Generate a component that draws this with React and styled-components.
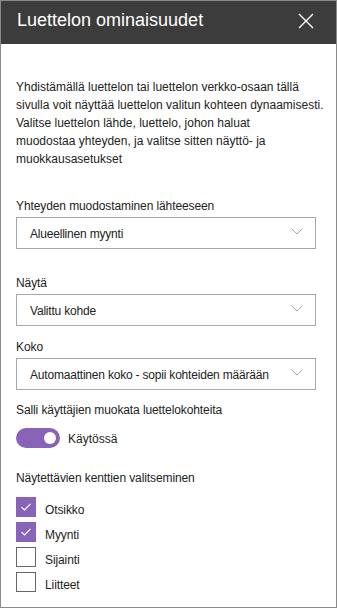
import React, { useState } from 'react';
import styled, { createGlobalStyle } from 'styled-components';

const GlobalStyle = createGlobalStyle`
  html, body {
    margin: 0;
    padding: 0;
    background: #ffffff;
  }
  body {
    font-family: "Liberation Sans", Arial, sans-serif;
    color: #333333;
  }
  * {
    box-sizing: border-box;
  }
`;

const description = [
  'Yhdistämällä luettelon tai luettelon verkko-osaan tällä',
  'sivulla voit näyttää luettelon valitun kohteen dynaamisesti.',
  'Valitse luettelon lähde, luettelo, johon haluat',
  'muodostaa yhteyden, ja valitse sitten näyttö- ja',
  'muokkausasetukset',
];

const Panel = () => {
  const [enabled, setEnabled] = useState(true);
  const [fields, setFields] = useState([
    { name: 'Otsikko', checked: true },
    { name: 'Myynti', checked: true },
    { name: 'Sijainti', checked: false },
    { name: 'Liitteet', checked: false },
  ]);

  const toggleField = (idx) => {
    setFields(fields.map((f, i) => (i === idx ? { ...f, checked: !f.checked } : f)));
  };

  return (
    <Frame>
      <Header>
        <Title>Luettelon ominaisuudet</Title>
        <CloseButton aria-label="Sulje">
          <svg width="16" height="16" viewBox="0 0 16 16">
            <path d="M1 1 L15 15 M15 1 L1 15" stroke="#ffffff" strokeWidth="1.4" fill="none" />
          </svg>
        </CloseButton>
      </Header>

      <Body>
        <Description>
          {description.map((line) => (
            <span key={line}>{line}</span>
          ))}
        </Description>

        <Label top={29}>Yhteyden muodostaminen lähteeseen</Label>
        <Dropdown>
          <span>Alueellinen myynti</span>
          <Chevron />
        </Dropdown>

        <Label top={25}>Näytä</Label>
        <Dropdown>
          <span>Valittu kohde</span>
          <Chevron />
        </Dropdown>

        <Label top={12}>Koko</Label>
        <Dropdown>
          <span>Automaattinen koko - sopii kohteiden määrään</span>
          <Chevron />
        </Dropdown>

        <Label top={11}>Salli käyttäjien muokata luettelokohteita</Label>
        <ToggleRow onClick={() => setEnabled(!enabled)}>
          <Toggle on={enabled}>
            <Knob on={enabled} />
          </Toggle>
          <ToggleText>{enabled ? 'Käytössä' : 'Ei käytössä'}</ToggleText>
        </ToggleRow>

        <Label top={21}>Näytettävien kenttien valitseminen</Label>
        <CheckList>
          {fields.map((f, i) => (
            <CheckRow key={f.name} onClick={() => toggleField(i)}>
              <Box checked={f.checked}>
                {f.checked && (
                  <svg width="12" height="10" viewBox="0 0 12 10">
                    <path d="M1.5 5.2 L4.5 8 L10.5 1.8" stroke="#ffffff" strokeWidth="1.1" fill="none" />
                  </svg>
                )}
              </Box>
              <CheckText>{f.name}</CheckText>
            </CheckRow>
          ))}
        </CheckList>
      </Body>
    </Frame>
  );
};

const Chevron = () => (
  <ChevronIcon width="12" height="7" viewBox="0 0 12 7">
    <path d="M0.5 0.6 L6 6 L11.5 0.6" stroke="#a6a6a6" strokeWidth="1" fill="none" />
  </ChevronIcon>
);

const Frame = styled.div`
  width: 337px;
  height: 608px;
  border: 1px solid #8a8a8a;
  display: flex;
  flex-direction: column;
  overflow: hidden;
`;

const Header = styled.div`
  height: 43px;
  background: #3c3c3c;
  display: flex;
  align-items: center;
  justify-content: space-between;
  padding: 0 22px 4px 16px;
`;

const Title = styled.h1`
  margin: 0;
  font-size: 18px;
  font-weight: 400;
  color: #ffffff;
  letter-spacing: 0;
`;

const CloseButton = styled.button`
  background: none;
  border: none;
  padding: 0;
  width: 16px;
  height: 16px;
  display: flex;
  cursor: pointer;
`;

const Body = styled.div`
  padding: 34px 20px 0 15px;
  display: flex;
  flex-direction: column;
`;

const Description = styled.p`
  margin: 0;
  font-size: 12px;
  line-height: 18px;
  color: #222222;
  letter-spacing: 0;

  span {
    display: block;
    white-space: nowrap;
  }
`;

const Label = styled.div`
  margin-top: ${(p) => p.top}px;
  font-size: 12px;
  line-height: 18px;
  color: #222222;
  letter-spacing: -0.1px;
`;

const Dropdown = styled.div`
  margin-top: 2px;
  height: 32px;
  width: 300px;
  border: 1px solid #a6a6a6;
  display: flex;
  align-items: center;
  justify-content: space-between;
  padding: 2px 12px 0 13px;
  font-size: 12px;
  color: #222222;
  letter-spacing: -0.2px;
  cursor: pointer;
`;

const ChevronIcon = styled.svg`
  flex-shrink: 0;
  margin-bottom: 6px;
`;

const ToggleRow = styled.div`
  margin-top: 9px;
  display: flex;
  align-items: center;
  gap: 8px;
  cursor: pointer;
`;

const Toggle = styled.div`
  width: 44px;
  height: 20px;
  border-radius: 10px;
  background: ${(p) => (p.on ? '#8764b8' : '#ffffff')};
  border: ${(p) => (p.on ? 'none' : '1px solid #666666')};
  display: flex;
  align-items: center;
  justify-content: ${(p) => (p.on ? 'flex-end' : 'flex-start')};
  padding: 0 4px;
`;

const Knob = styled.div`
  width: 12px;
  height: 12px;
  border-radius: 50%;
  background: ${(p) => (p.on ? '#ffffff' : '#666666')};
`;

const ToggleText = styled.span`
  font-size: 12px;
  color: #222222;
  margin-top: 1px;
`;

const CheckList = styled.div`
  margin-top: 10px;
  display: flex;
  flex-direction: column;
  gap: 5px;
`;

const CheckRow = styled.div`
  display: flex;
  align-items: center;
  gap: 9px;
  cursor: pointer;
`;

const Box = styled.div`
  width: 20px;
  height: 20px;
  display: flex;
  align-items: center;
  justify-content: center;
  background: ${(p) => (p.checked ? '#8764b8' : '#ffffff')};
  border: 1px solid ${(p) => (p.checked ? '#8764b8' : '#666666')};
`;

const CheckText = styled.span`
  font-size: 12px;
  color: #222222;
  letter-spacing: -0.1px;
  margin-top: 5px;
`;

export default function App() {
  return (
    <>
      <GlobalStyle />
      <Panel />
    </>
  );
}
